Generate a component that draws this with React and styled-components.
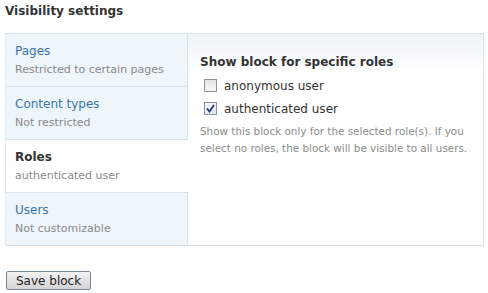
import styled, { createGlobalStyle } from "styled-components";

const Global = createGlobalStyle`
body {
    margin: 0;
    background: #fff;
    font-family: "DejaVu Sans", Verdana, sans-serif;
    color: #494949;
}
`;

const tabs = [
    { title: "Pages", summary: "Restricted to certain pages" },
    { title: "Content types", summary: "Not restricted" },
    { title: "Roles", summary: "authenticated user", active: true },
    { title: "Users", summary: "Not customizable" },
];

const roles = [
    { label: "anonymous user", checked: false },
    { label: "authenticated user", checked: true },
];

const App = () => {
    return <Page>
        <Global />
        <Heading>Visibility settings</Heading>

        <Panel>
            <TabList>
                {tabs.map((t, i) => (
                    <Tab key={t.title} $active={t.active} $last={i === tabs.length - 1}>
                        <TabTitle $active={t.active}>{t.title}</TabTitle>
                        <TabSummary>{t.summary}</TabSummary>
                    </Tab>
                ))}
            </TabList>

            <Pane>
                <PaneTitle>Show block for specific roles</PaneTitle>
                <Roles>
                    {roles.map((r) => (
                        <RoleRow key={r.label}>
                            <Box $checked={r.checked}>
                                {r.checked && <svg width="9" height="9" viewBox="0 0 9 9">
                                    <path d="M1 4.5 L3.5 7.5 L8 1" fill="none" stroke="#23387a" strokeWidth="1.8" />
                                </svg>}
                            </Box>
                            <RoleLabel>{r.label}</RoleLabel>
                        </RoleRow>
                    ))}
                </Roles>
                <Help>Show this block only for the selected role(s). If you select no roles, the block will be visible to all users.</Help>
            </Pane>
        </Panel>

        <SaveButton>Save block</SaveButton>
    </Page>
}

export default App;

const Page = styled.div`
padding: 3px 4px 0 5px;
`;

const Heading = styled.h2`
margin: 0;
font-size: 12px;
font-weight: bold;
color: #333;
line-height: 16px;
`;

const Panel = styled.div`
margin-top: 14px;
display: flex;
border: 1px solid #d8e3ea;
border-bottom: none;
border-left: 1px solid #e4ecf2;
`;

const TabList = styled.div`
width: 181px;
display: flex;
flex-direction: column;
background: #eef5fb;
border-right: 1px solid #d8e3ea;
`;

const Tab = styled.div`
height: 53px;
box-sizing: border-box;
padding: 9px 0 0 9px;
border-bottom: 1px solid ${(p) => (p.$last ? "#d3dee6" : "#d8e3ea")};
background: ${(p) => (p.$active ? "#fff" : "transparent")};
margin-right: ${(p) => (p.$active ? "-1px" : "0")};
position: relative;
`;

const TabTitle = styled.div`
font-size: 12px;
line-height: 16px;
color: ${(p) => (p.$active ? "#333" : "#3a76a6")};
font-weight: ${(p) => (p.$active ? "bold" : "normal")};
`;

const TabSummary = styled.div`
margin-top: 4px;
font-size: 11px;
line-height: 14px;
color: #8a8a8a;
`;

const Pane = styled.div`
flex: 1;
padding: 20px 12px 0 12px;
background: linear-gradient(#edf4f9 0px, #fff 40px);
border-bottom: 1px solid #d3dee6;
`;

const PaneTitle = styled.div`
font-size: 12px;
font-weight: bold;
color: #333;
line-height: 16px;
`;

const Roles = styled.div`
margin-top: 4px;
`;

const RoleRow = styled.label`
display: flex;
align-items: center;
gap: 7px;
height: 23px;
padding-left: 4px;
`;

const Box = styled.span`
width: 11px;
height: 11px;
border: 1px solid #8f8f9d;
background: ${(p) => (p.$checked ? "linear-gradient(#eef3fb, #dfe7f3)" : "linear-gradient(#e4e4e4, #f8f8f8)")};
display: flex;
align-items: center;
justify-content: center;
`;

const RoleLabel = styled.span`
font-size: 12px;
color: #333;
`;

const Help = styled.p`
margin: 3px 0 0 0;
font-size: 10.4px;
line-height: 17px;
color: #8c8c8c;
`;

const SaveButton = styled.button`
margin-top: 25px;
margin-left: 1px;
padding: 0 9px;
height: 19px;
font-family: "DejaVu Sans", Verdana, sans-serif;
font-size: 12px;
color: #222;
background: linear-gradient(#f2f2f2, #d4d4d4);
border: 1px solid #7a8a99;
border-radius: 2px;
`;
